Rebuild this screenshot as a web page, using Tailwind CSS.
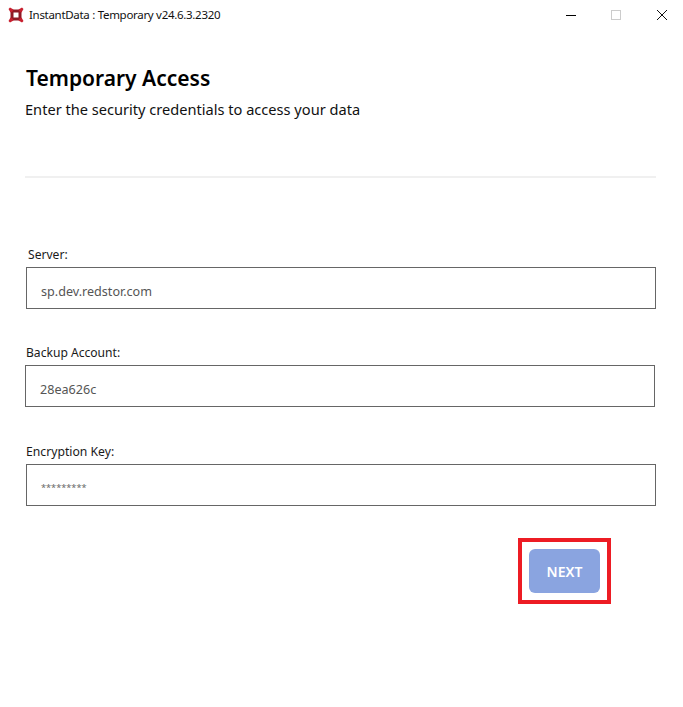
<!doctype html>
<html>
<head>
<meta charset="utf-8">
<script src="https://cdn.jsdelivr.net/npm/@tailwindcss/browser@4"></script>
</head>
<body class="bg-white">
<div class="w-[683px] h-[707px] overflow-hidden bg-white text-black font-['Noto_Sans','Open_Sans',sans-serif] flex flex-col">
  <header class="h-[30px] flex items-center justify-between shrink-0 pr-[16px]">
    <div class="flex items-center pl-[8px] gap-[5px]">
      <svg width="16" height="16" viewBox="0 0 16 16" aria-hidden="true">
        <path fill="#8f1a26" fill-rule="evenodd" d="M2.5 2.5 H13.5 V13.5 H2.5 Z M5.5 5.5 V10.5 H10.5 V5.5 Z"/>
        <path fill="#c8202f" d="M0.5 2 L2 0.5 L5.5 2.5 L4.5 4.5 L2.5 5.5 Z M15.5 2 L14 0.5 L10.5 2.5 L11.5 4.5 L13.5 5.5 Z M0.5 14 L2 15.5 L5.5 13.5 L4.5 11.5 L2.5 10.5 Z M15.5 14 L14 15.5 L10.5 13.5 L11.5 11.5 L13.5 10.5 Z"/>
      </svg>
      <span class="text-[11.5px] leading-[16px] text-[#111] tracking-[-0.3px]">InstantData : Temporary v24.6.3.2320</span>
    </div>
    <div class="flex items-center gap-[35px]">
      <div class="w-[10px] h-px bg-black"></div>
      <div class="w-[10px] h-[10px] border border-[#cccccc]"></div>
      <svg class="ml-[1px]" width="10" height="10" viewBox="0 0 10 10" aria-hidden="true"><path d="M0 0 L10 10 M10 0 L0 10" stroke="#111" stroke-width="1" fill="none"/></svg>
    </div>
  </header>

  <main class="flex flex-col pl-[25px] pr-[27px]">
    <h1 class="ml-[1px] mt-[32px] text-[21px] leading-[32px] font-semibold">Temporary Access</h1>
    <p class="-mt-[1px] text-[14.6px] leading-[32px] text-[#111]">Enter the security credentials to access your data</p>

    <div class="mt-[51px] h-[2px] bg-[#f0f0f0]"></div>

    <label class="block ml-[3px] mt-[67px] text-[12.1px] leading-[20px] text-[#1a1a1a]">Server:</label>
    <div class="ml-[1px] mt-[2px] h-[42px] border border-[#666666] flex items-center pl-[14px] pt-[8px] text-[12.6px] text-[#555555]">sp.dev.redstor.com</div>

    <label class="block ml-[1px] mt-[34px] text-[12.1px] leading-[20px] text-[#1a1a1a]">Backup Account:</label>
    <div class="mr-[1px] mt-[2px] h-[42px] border border-[#666666] flex items-center pl-[14px] pt-[8px] text-[12.6px] text-[#555555]">28ea626c</div>

    <label class="block ml-[1px] mt-[35px] text-[12.2px] leading-[20px] text-[#1a1a1a]">Encryption Key:</label>
    <div class="ml-[1px] mt-[2px] h-[42px] border border-[#666666] flex items-center pl-[14px] pt-[6px] text-[9.2px] text-[#666666]">*********</div>

    <div class="mt-[32px] flex justify-end pr-[45px]">
      <div class="w-[93px] h-[66px] border-[4px] border-[#ed1c24] flex items-center justify-center">
        <button class="w-[71px] h-[44px] rounded-[6px] bg-[#8aa4e0] text-white text-[14px] font-semibold">NEXT</button>
      </div>
    </div>
  </main>
</div>
</body>
</html>
